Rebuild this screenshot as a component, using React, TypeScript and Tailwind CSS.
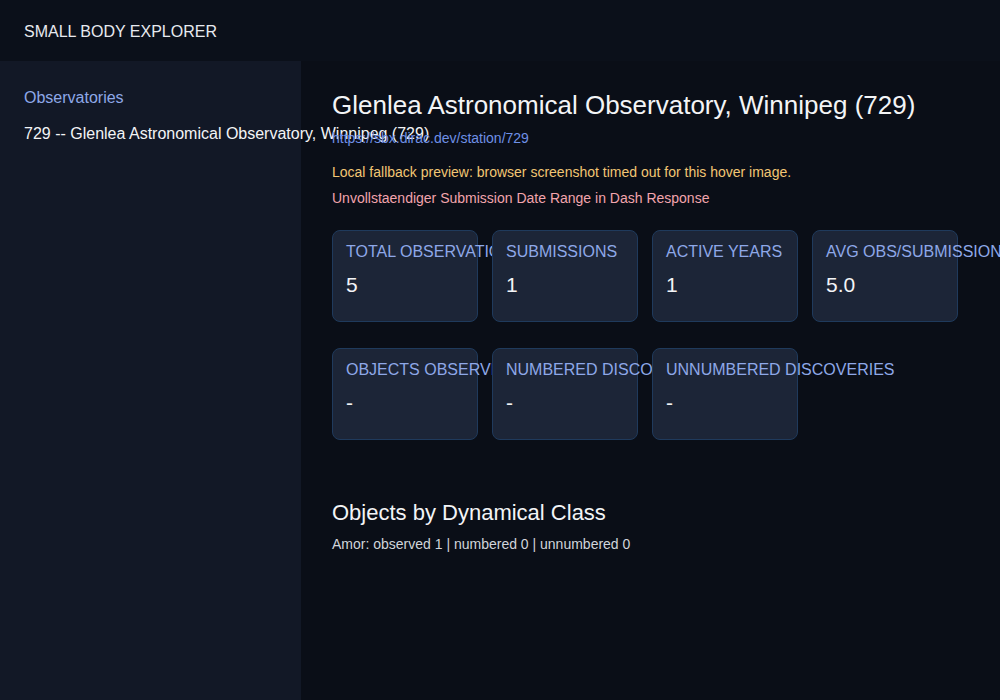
import React from "react";

const stats = [
  { label: "Total Observations", value: "5" },
  { label: "Submissions", value: "1" },
  { label: "Active Years", value: "1" },
  { label: "Avg Obs/Submission", value: "5.0" },
];

const discoveries = [
  { label: "Objects Observed", value: "-" },
  { label: "Numbered Discoveries", value: "-" },
  { label: "Unnumbered Discoveries", value: "-" },
];

const StatCard: React.FC<{ label: string; value: string }> = ({ label, value }) => (
  <div className="isolate w-[146px] h-[92px] shrink-0 rounded-lg border border-[#1f3a5c] bg-[#1c2537] px-[13px] pt-[11px]">
    <div className="whitespace-nowrap text-base leading-[20px] uppercase text-[#8ea8e8]">
      {label}
    </div>
    <div className="mt-[10px] text-[21px] leading-[26px] text-[#f3f4f6]">{value}</div>
  </div>
);

export default function App() {
  return (
    <div
      className="flex min-h-screen w-full flex-col bg-[#0a0e17] overflow-hidden"
      style={{ fontFamily: '"Liberation Sans", Arial, sans-serif' }}
    >
      <header className="flex h-[61px] shrink-0 items-center bg-[#0b101a] px-6 pt-[2px] text-base text-[#e8eaef]">
        SMALL BODY EXPLORER
      </header>

      <div className="flex flex-1">
        <aside className="w-[301px] shrink-0 bg-[#121826] px-6 pt-[25px]">
          <div className="mb-3 text-base leading-6 text-[#8ea8e8]">Observatories</div>
          <div className="whitespace-nowrap text-base leading-6 text-[#f3f4f6]">
            729 -- Glenlea Astronomical Observatory, Winnipeg (729)
          </div>
        </aside>

        <main className="flex-1 pl-[31px] pt-[30px]">
          <h1 className="whitespace-nowrap text-[26px] leading-[29px] text-[#f3f4f6]">
            Glenlea Astronomical Observatory, Winnipeg (729)
          </h1>
          <a
            href="#"
            className="mt-[10px] block text-sm leading-4 text-[#6f90e6]"
          >
            https://sbx.dirac.dev/station/729
          </a>
          <p className="mt-[18px] text-sm leading-4 text-[#f2c674]">
            Local fallback preview: browser screenshot timed out for this hover image.
          </p>
          <p className="mt-[10px] text-sm leading-4 text-[#f2a4ad]">
            Unvollstaendiger Submission Date Range in Dash Response
          </p>

          <div className="mt-6 flex gap-[14px]">
            {stats.map((s) => (
              <StatCard key={s.label} label={s.label} value={s.value} />
            ))}
          </div>
          <div className="mt-[26px] flex gap-[14px]">
            {discoveries.map((s) => (
              <StatCard key={s.label} label={s.label} value={s.value} />
            ))}
          </div>

          <h2 className="mt-[60px] text-[22px] leading-[25px] text-[#f3f4f6]">
            Objects by Dynamical Class
          </h2>
          <p className="mt-[11px] text-sm leading-4 text-[#d1d5db]">
            Amor: observed 1 | numbered 0 | unnumbered 0
          </p>
        </main>
      </div>
    </div>
  );
}
